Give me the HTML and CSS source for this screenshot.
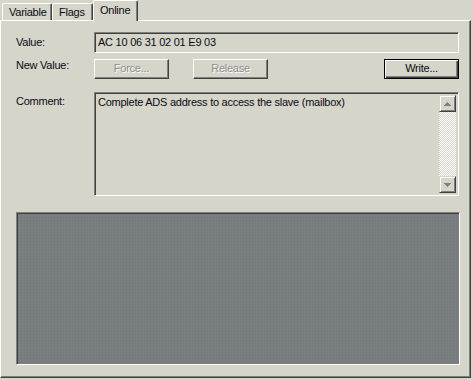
FILE: index.html
```html
<!DOCTYPE html>
<html>
<head>
<meta charset="utf-8">
<link rel="stylesheet" href="styles.css">
</head>
<body>
<div class="dialog">
  <div class="tabs">
    <div class="tab tab-variable">Variable</div>
    <div class="tab tab-flags">Flags</div>
    <div class="tab tab-active">Online</div>
  </div>
  <div class="panel">
    <div class="row row-value">
      <div class="label">Value:</div>
      <div class="field value-field">AC 10 06 31 02 01 E9 03</div>
    </div>
    <div class="row row-buttons">
      <div class="label">New Value:</div>
      <div class="buttons">
        <div class="btn disabled">Force...</div>
        <div class="btn disabled">Release</div>
        <div class="spacer"></div>
        <div class="btn default">Write...</div>
      </div>
    </div>
    <div class="row row-comment">
      <div class="label">Comment:</div>
      <div class="field comment-field">
        <div class="comment-text">Complete ADS address to access the slave (mailbox)</div>
        <div class="scrollbar">
          <div class="sb-btn"><svg width="7" height="4" viewBox="0 0 7 4"><path d="M3 0h1v1h1v1h1v1h1v1H0V3h1V2h1V1h1z" fill="#808080"/></svg></div>
          <div class="sb-track"></div>
          <div class="sb-btn"><svg width="7" height="4" viewBox="0 0 7 4"><path d="M0 0h7v1H6v1H5v1H4v1H3V3H2V2H1V1H0z" fill="#808080"/></svg></div>
        </div>
      </div>
    </div>
    <div class="graybox"></div>
  </div>
</div>
</body>
</html>
```

FILE: styles.css
```css
html, body {
  margin: 0;
  padding: 0;
}
body {
  width: 473px;
  height: 380px;
  background: #d6d5ca;
  font-family: "Liberation Sans", Arial, sans-serif;
  font-size: 11px;
  letter-spacing: -0.25px;
  color: #0a0a14;
  overflow: hidden;
}
.dialog {
  display: flex;
  flex-direction: column;
  width: 471px;
}
.tabs {
  display: flex;
  align-items: flex-end;
  height: 20px;
  padding-left: 2px;
  position: relative;
  z-index: 1;
}
.tab {
  box-sizing: border-box;
  height: 17px;
  border-top: 1px solid #fff;
  border-left: 1px solid #fff;
  border-right: 1px solid #404040;
  box-shadow: inset -1px 0 #808080;
  border-radius: 2px 2px 0 0;
  padding: 2px 0 0 6px;
  line-height: 13px;
}
.tab-variable { width: 50px; }
.tab-flags { width: 41px; }
.tab-active {
  width: 45px;
  height: 21px;
  margin-bottom: -1px;
  padding: 3px 0 0 6px;
  background: #d6d5ca;
}
.panel {
  box-sizing: border-box;
  height: 358px;
  border-top: 1px solid #fff;
  border-left: 1px solid #fff;
  border-right: 1px solid #404040;
  border-bottom: 1px solid #404040;
  box-shadow: inset -1px -1px #808080;
  padding: 11px 0 0 15px;
  display: flex;
  flex-direction: column;
}
.row {
  display: flex;
  align-items: flex-start;
}
.label {
  width: 78px;
  flex: none;
}
.row-value .label { padding-top: 4px; }
.field {
  box-sizing: border-box;
  width: 365px;
  border: 1px solid;
  border-color: #808080 #fff #fff #808080;
  box-shadow: inset 1px 1px #404040;
}
.value-field {
  height: 21px;
  padding: 3px 0 0 3px;
  line-height: 13px;
}
.row-buttons { margin-top: 6px; }
.row-buttons .label { line-height: 13px; }
.buttons {
  display: flex;
  width: 365px;
}
.btn {
  box-sizing: border-box;
  width: 75px;
  height: 20px;
  border: 1px solid;
  border-color: #fff #404040 #404040 #fff;
  box-shadow: inset -1px -1px #808080;
  text-align: center;
  line-height: 17px;
}
.btn + .btn { margin-left: 24px; }
.spacer { flex: 1; }
.spacer + .btn { margin-left: 0; }
.disabled {
  color: #8d8d8d;
  text-shadow: 1px 1px #fff;
}
.default {
  border: 1px solid #000;
  box-shadow: inset 1px 1px #fff, inset -1px -1px #404040, inset -2px -2px #808080;
}
.row-comment { margin-top: 13px; }
.row-comment .label { padding-top: 3px; }
.comment-field {
  height: 104px;
  display: flex;
  padding: 2px;
}
.comment-text {
  flex: 1;
  padding: 1px 0 0 1px;
  line-height: 13px;
}
.scrollbar {
  width: 17px;
  display: flex;
  flex-direction: column;
}
.sb-btn {
  box-sizing: border-box;
  height: 17px;
  background: #d6d5ca;
  border: 1px solid;
  border-color: #d6d5ca #404040 #404040 #d6d5ca;
  box-shadow: inset 1px 1px #fff, inset -1px -1px #808080;
  display: flex;
  align-items: center;
  justify-content: center;
}
.sb-track {
  flex: 1;
  background-color: #f0efea;
  background-image: repeating-conic-gradient(#fff 0 25%, #d6d5ca 0 50%);
  background-size: 2px 2px;
}
.graybox {
  box-sizing: border-box;
  margin-top: 16px;
  width: 444px;
  height: 153px;
  border: 1px solid;
  border-color: #808080 #fff #fff #808080;
  box-shadow: inset 1px 1px #404040;
  background-color: #7b7e7f;
  background-image: radial-gradient(circle, #6a787a 0.6px, transparent 0.8px);
  background-size: 3px 3px;
}
```
